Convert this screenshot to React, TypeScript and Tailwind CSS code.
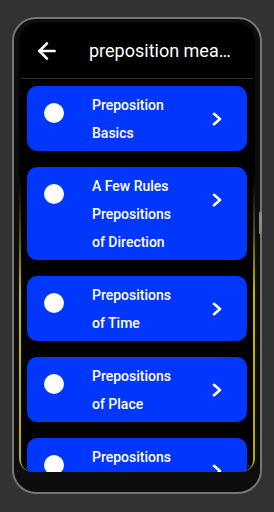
import { ArrowLeft } from "lucide-react";

const LESSONS: string[][] = [
  ["Preposition", "Basics"],
  ["A Few Rules", "Prepositions", "of Direction"],
  ["Prepositions", "of Time"],
  ["Prepositions", "of Place"],
  ["Prepositions", "of Movement"],
];

function Chevron() {
  return (
    <svg width="10" height="14" viewBox="0 0 10 14" fill="none" className="shrink-0 mt-[21px]">
      <polyline points="2,1.8 8,7 2,12.2" stroke="white" strokeWidth="2.6" strokeLinecap="round" strokeLinejoin="round" />
    </svg>
  );
}

function LessonCard({ lines }: { lines: string[] }) {
  return (
    <div className="shrink-0 flex items-start rounded-[10px] bg-[#0136fd] pl-[17px] pr-[25px] pt-[5px] pb-[4px]">
      <div className="w-5 h-5 rounded-full bg-white shrink-0 mt-[12px]" />
      <div className="ml-[28px] w-[96px] text-white text-[14px] leading-[28px] font-medium">
        {lines.map((l, i) => (
          <div key={i}>{l}</div>
        ))}
      </div>
      <div className="flex-1" />
      <Chevron />
    </div>
  );
}

export default function App() {
  return (
    <div className="w-[274px] h-[512px] bg-[#323232] pt-[17px] pl-[12px] overflow-hidden" style={{ fontFamily: "Roboto, 'Liberation Sans', sans-serif" }}>
      <div className="relative w-[250px] h-[477px] rounded-[24px] border-2 border-[#767676] bg-[#0d0d0d] pt-[4px] px-[5px] pb-[20px]">
        {/* side button */}
        <div className="absolute right-[-2px] top-[193px] w-[3px] h-[22px] rounded-r-sm bg-[#8a8a8a]" />
        <div className="h-full rounded-t-[18px] rounded-b-[14px] px-[2px] bg-gradient-to-b from-black from-30% via-[#c9b800] via-60% to-[#b8a900] overflow-hidden">
          <div className="h-full rounded-t-[16px] rounded-b-[12px] bg-black flex flex-col overflow-hidden">
            <div className="h-[56px] shrink-0 flex items-center border-b border-[#303030]">
              <ArrowLeft size={26} strokeWidth={2.4} className="text-white ml-[13px]" />
              <div className="ml-[29px] w-[146px] truncate text-white text-[18px]">
                preposition meanings
              </div>
            </div>
            <div className="flex-1 flex flex-col gap-4 px-[6px] pt-[7px] overflow-hidden">
              {LESSONS.map((l, i) => (
                <LessonCard key={i} lines={l} />
              ))}
            </div>
          </div>
        </div>
      </div>
    </div>
  );
}
